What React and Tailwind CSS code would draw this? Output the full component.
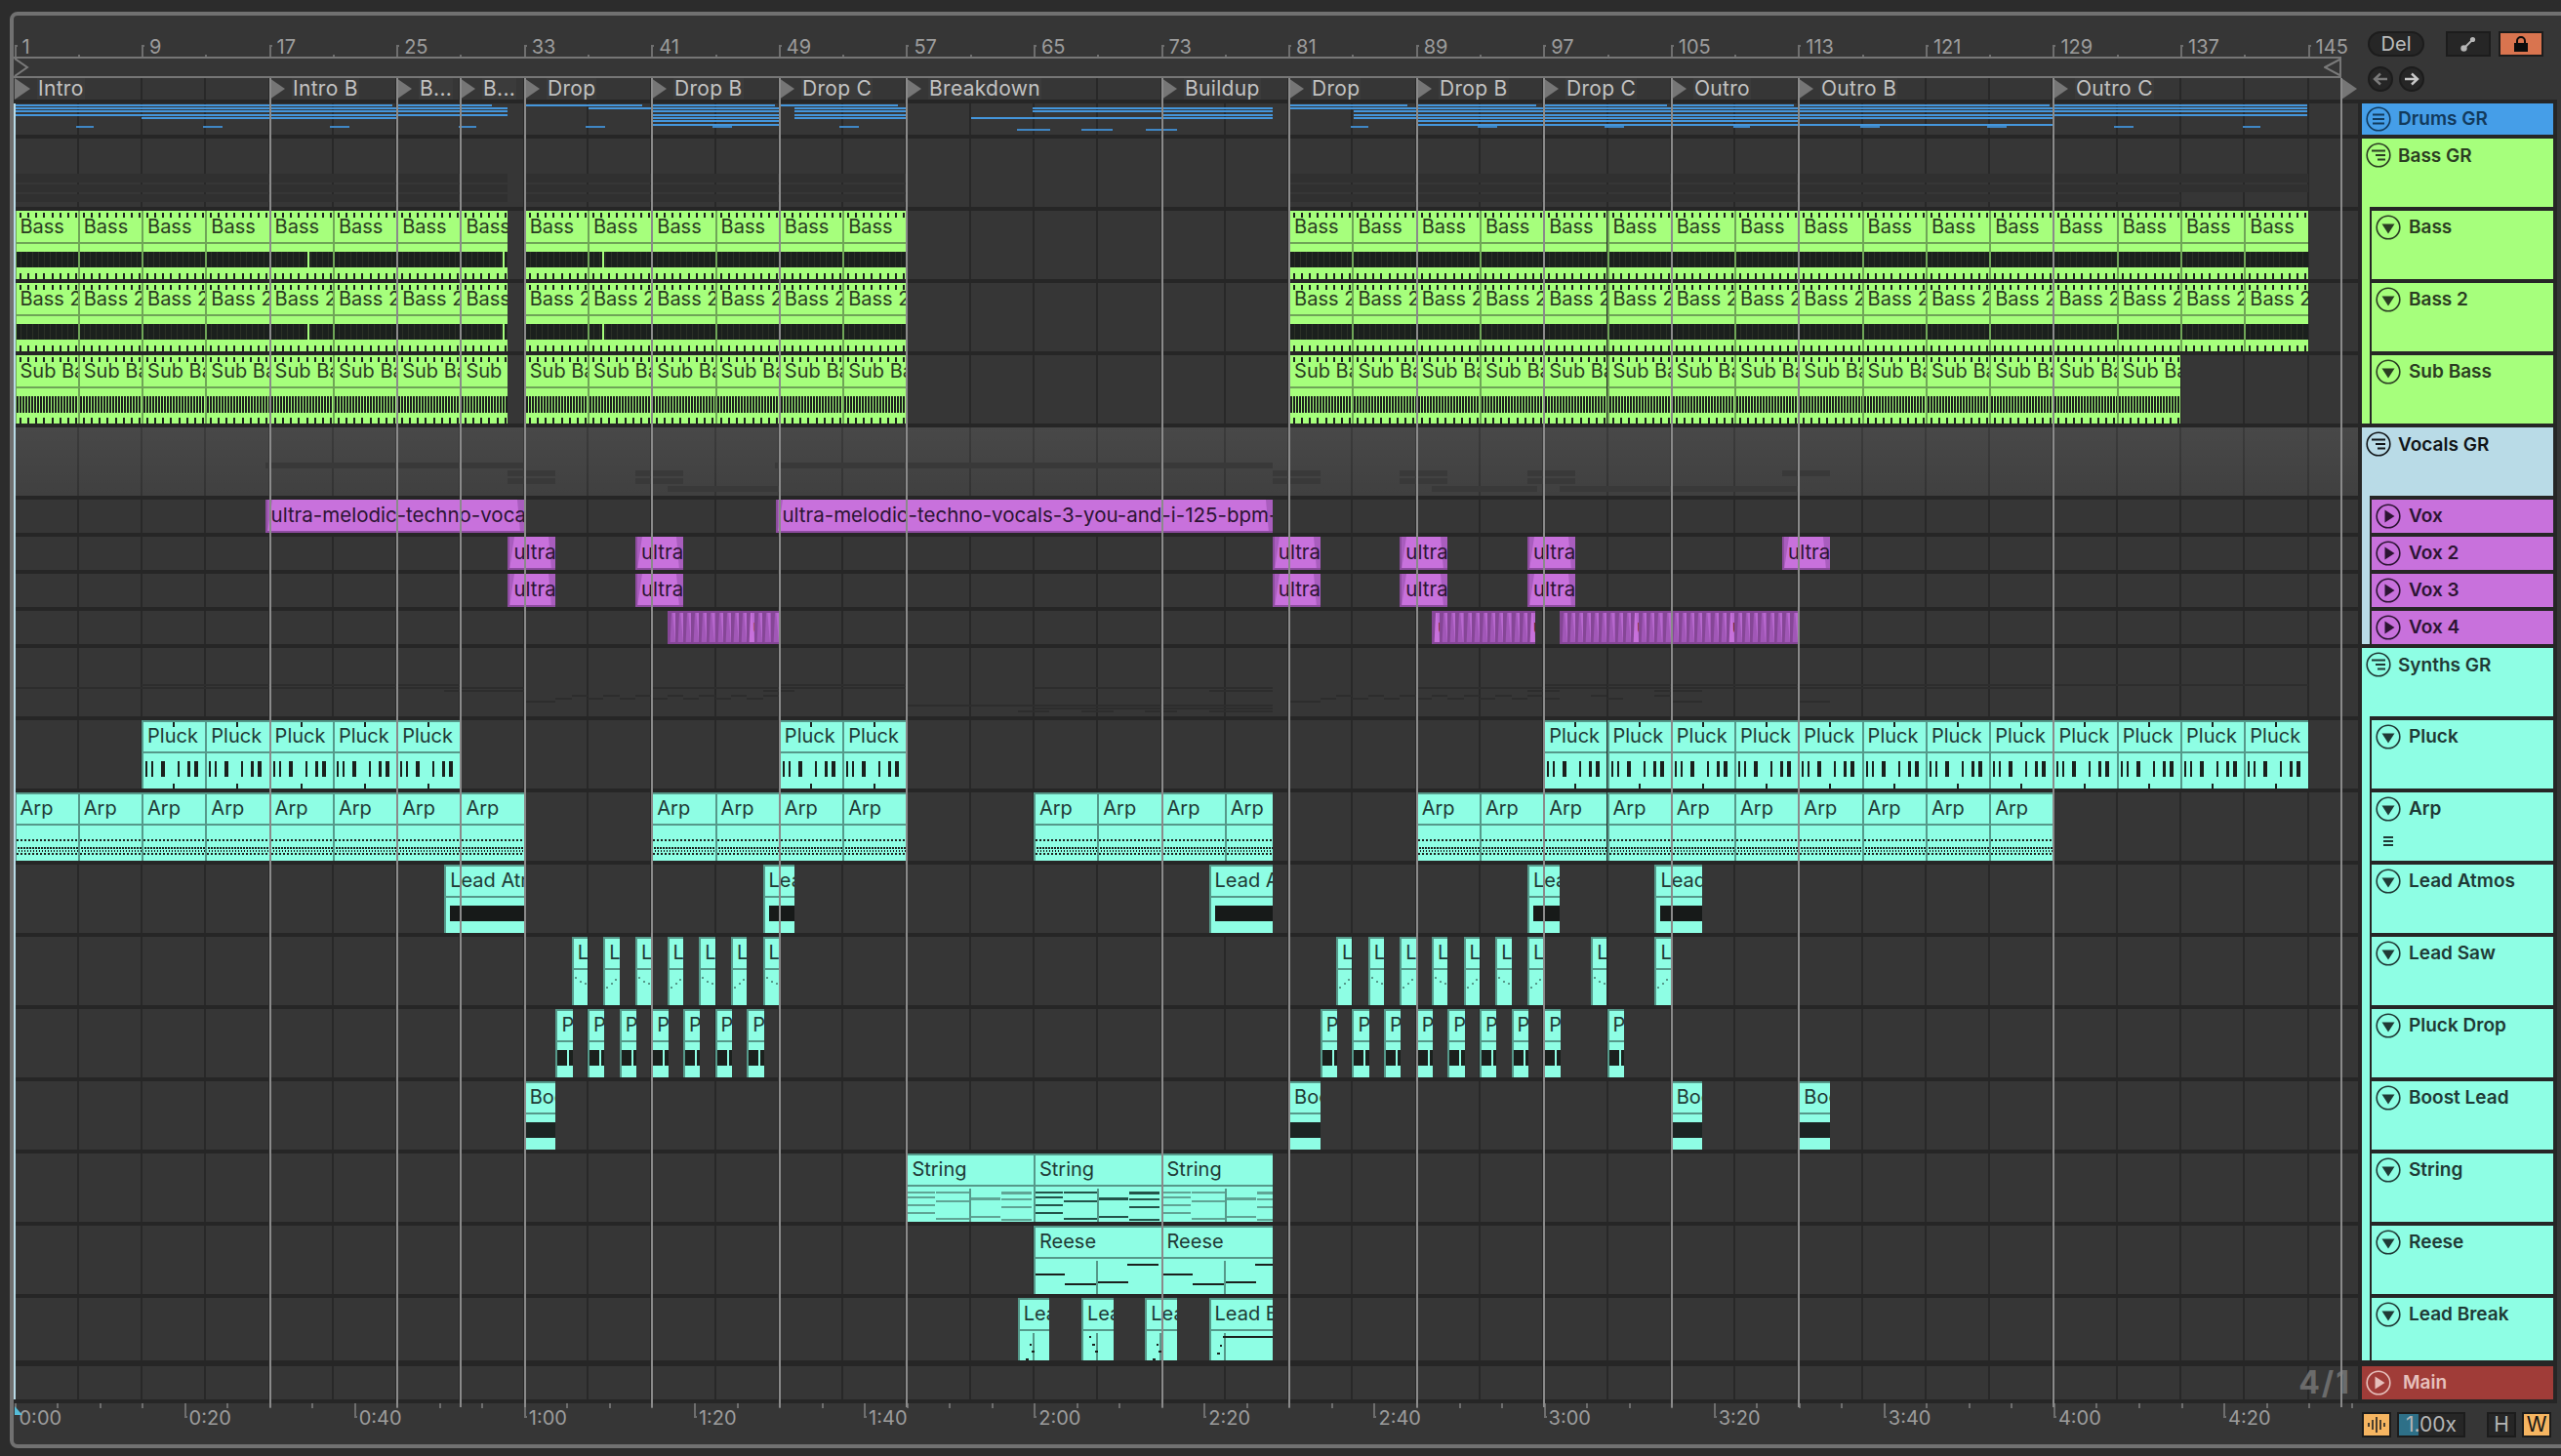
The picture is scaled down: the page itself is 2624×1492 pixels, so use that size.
import React from 'react';

const BAR = 16.32;
const X = (b) => 0.5 + (b - 1) * BAR;
const range = (a, b, s) => { const o = []; for (let i = a; i < b; i += s) o.push(i); return o; };

const T = {
  green: { bg: 'bg-[#a6ff7c]', fg: 'text-[#2b3d22]', dk: 'bg-[#6fa557]', br: 'border-[#6fa557]' },
  teal: { bg: 'bg-[#8efee4]', fg: 'text-[#1f3a36]', dk: 'bg-[#55998a]', br: 'border-[#55998a]' },
};
const NOTE = '#1b201d';

function Clip({ from, to, tone, label, top = true, left = true, children }) {
  const t = T[tone];
  return (
    <div className={`absolute top-0 h-full overflow-hidden ${t.bg} ${t.fg}`} style={{ left: X(from), width: (to - from) * BAR }}>
      <div className={`h-[34px] border-b-2 ${t.br} pl-[6px] text-[20px] leading-[33px] whitespace-nowrap`}>{label}</div>
      {children && <svg className="absolute inset-0 h-full w-full" shapeRendering="crispEdges">{children}</svg>}
      {left && <div className={`absolute left-0 top-0 h-full w-[2px] ${t.dk}`} />}
      {top && <div className={`absolute left-0 top-0 h-[2px] w-full ${t.dk}`} />}
    </div>
  );
}

const Ticks = () => (
  <g stroke={NOTE}>
    <line x1="5" x2="66" y1="4.5" y2="4.5" strokeWidth="5" strokeDasharray="2 6.16" />
    <line x1="5" x2="66" y1="67" y2="67" strokeWidth="6" strokeDasharray="2 6.16" />
  </g>
);

const GAPS = { 17: 39, 29: 44, 37: 15 };
const BassNotes = ({ bar }) => (
  <g>
    <Ticks />
    <rect x="2" y="42" width="70" height="16" fill={NOTE} />
    <line x1="0" x2="70" y1="50" y2="50" stroke="#2b3027" strokeWidth="16" strokeDasharray="1 5" />
    {GAPS[bar] && <rect x={GAPS[bar]} y="42" width="2" height="16" fill="#a6ff7c" />}
  </g>
);
const SubNotes = () => (
  <g>
    <Ticks />
    <line x1="2" x2="70" y1="50" y2="50" stroke={NOTE} strokeWidth="17" strokeDasharray="2 1" />
  </g>
);
const PluckNotes = () => (
  <g fill={NOTE}>
    <rect x="31.5" y="2" width="2" height="5" />
    <rect x="31.5" y="65" width="2" height="5" />
    {[[4, 2], [10, 2], [20, 4], [37, 2], [47, 2.5], [54, 4]].map(([x, w]) => <rect key={x} x={x} y="42" width={w} height="16" />)}
  </g>
);
const ArpNotes = () => (
  <g stroke={NOTE} strokeWidth="2">
    <line x1="2" x2="66" y1="49" y2="49" strokeDasharray="2 2" />
    <line x1="0" x2="66" y1="57" y2="57" strokeDasharray="2 1" />
    <line x1="1" x2="66" y1="59.5" y2="59.5" strokeDasharray="1 2" />
    <line x1="2" x2="66" y1="63" y2="63" strokeDasharray="2 2" />
  </g>
);
const STR = [[0, 31, [40, 45, 53, 61]], [31, 35, [40, 49, 67]], [66, 32, [46, 46.8, 65]], [98, 32, [40, 40.8, 47, 55, 68]]];
const StringNotes = ({ color }) => (
  <g stroke={color} strokeWidth="2">
    {STR.map(([x, w, ys]) => ys.map((y) => <line key={x + '-' + y} x1={x} x2={x + w - 1} y1={y} y2={y} />))}
    <line x1="65.5" x2="65.5" y1="36" y2="70" stroke="#55998a" strokeWidth="2" />
  </g>
);
const ReeseNotes = () => (
  <g stroke={NOTE} strokeWidth="2">
    {[[0, 50], [32, 60], [65, 58], [96, 40]].map(([x, y]) => <line key={x} x1={x} x2={x + 32} y1={y} y2={y} />)}
    <line x1="65" x2="65" y1="36" y2="70" stroke="#55998a" strokeWidth="2" />
  </g>
);
const Specks = ({ pts, fill = NOTE }) => (
  <g fill={fill}>{pts.map(([x, y, w = 2], i) => <rect key={i} x={x} y={y} width={w} height="2" />)}</g>
);

const Fade = ({ side }) => (
  <svg className={`absolute top-0 h-full w-[7px] ${side === 'l' ? 'left-0' : 'right-0'}`} viewBox="0 0 7 34">
    <polygon points={side === 'l' ? '0,0 7,0 2,34 0,34' : '0,0 7,0 7,34 3,34'} fill="#a95dbe" />
  </svg>
);

function VoxClip({ from, to, label }) {
  return (
    <div className="absolute top-0 h-full overflow-hidden bg-[#c871dc] pl-[6px] text-[20.5px] leading-[32px] whitespace-nowrap text-[#2c1433]" style={{ left: X(from), width: (to - from) * BAR }}>
      <Fade side="l" />
      <Fade side="r" />
      <span className="relative">{label}</span>
      <div className="absolute left-0 top-0 h-full w-[2px] bg-[#8d4c9f]" />
      <div className="absolute bottom-0 left-0 h-[2px] w-full bg-[#8d4c9f]" />
    </div>
  );
}

function VoxSlices({ from, to, marks }) {
  const n = Math.round((to - from) * 2);
  return (
    <div className="absolute top-0 flex h-full overflow-hidden" style={{ left: X(from), width: (to - from) * BAR }}>
      {range(0, n, 1).map((i) => {
        const hit = marks.includes(i);
        return (
          <div key={i} className={`relative h-full w-[8.16px] shrink-0 overflow-hidden pl-[6px] text-[20px] leading-[32px] text-[#2c1433] ${hit ? 'bg-[#c871dc]' : 'bg-[#a157b7]'}`}>
            <svg className="absolute left-0 top-0 h-full w-full" viewBox="0 0 8 34" preserveAspectRatio="none">
              <polygon points="0,0 4,0 2.5,34 0,34" fill="#854696" />
              <polygon points="5,0 8,0 8,34" fill="#b868cf" />
            </svg>
            {hit && <span className="relative">ultra</span>}
            <div className="absolute left-0 top-0 h-[2px] w-full bg-[#854696]" />
            <div className="absolute bottom-0 left-0 h-[2px] w-full bg-[#854696]" />
          </div>
        );
      })}
    </div>
  );
}

const Strip = ({ x1, x2, y, h, cls }) => (
  <div className={`absolute ${cls}`} style={{ left: x1, width: x2 - x1, top: y, height: h }} />
);

/* Drums GR overview: [lane index, x1, x2] in page pixels */
const DR_Y = [0.5, 4, 7, 10.5, 14, 17, 20.5];
const DRUMS = [
  [0, 15, 402], [0, 408, 504], [1, 15, 520], [2, 15, 520], [3, 15, 520], [4, 145, 407],
  [0, 537, 658], [1, 603, 667], [0, 667, 794], [1, 667, 798], [2, 667, 798], [3, 667, 798], [4, 667, 798], [5, 667, 798], [6, 667, 798],
  [0, 800, 920], [1, 814, 929], [2, 814, 929], [3, 814, 929], [4, 814, 929],
  [4, 995, 1304], [1, 1058, 1304], [2, 1058, 1304], [3, 1190, 1304],
  [0, 1321, 1442], [1, 1321, 2364], [2, 1387, 2364], [3, 1387, 2364], [4, 1387, 2104], [5, 1451, 1843], [6, 1451, 2104],
  [0, 1451, 1574], [0, 1583, 1708], [0, 1713, 1838], [0, 1843, 2100], [0, 2105, 2364],
];
const DASHES = [
  [24, 78, 96], [24, 208, 228], [24, 338, 358], [24, 470, 488], [24, 600, 620], [24, 730, 750], [24, 860, 880],
  [27, 1042, 1076], [27, 1108, 1140], [27, 1174, 1206],
  [24, 1384, 1402], [24, 1514, 1534], [24, 1644, 1664], [24, 1776, 1793], [24, 1906, 1926], [24, 2036, 2056], [24, 2166, 2186], [24, 2298, 2316],
];

const Lane = ({ h = 'h-[74px]', bg = '', children }) => (
  <div className={`relative border-b-4 border-[#262626] ${h} ${bg}`}>{children}</div>
);

const BASS_STARTS = [...range(1, 33, 4), ...range(33, 57, 4), ...range(81, 145, 4)];
const SUB_STARTS = [...range(1, 33, 4), ...range(33, 57, 4), ...range(81, 137, 4)];
const clipEnd = (b) => (b === 29 ? 32 : b + 4);

const VOX2 = [32, 40, 80, 88, 96, 112];
const VOX3 = [32, 40, 80, 88, 96];
const PLUCK = [...range(9, 29, 4), ...range(49, 57, 4), ...range(97, 145, 4)];
const ARP = [...range(1, 33, 4), ...range(41, 57, 4), ...range(65, 81, 4), ...range(89, 129, 4)];
const ATMOS = [[28, 33], [48, 50], [76, 80], [96, 98], [104, 107]];
const SAW = [36, 38, 40, 42, 44, 46, 48, 84, 86, 88, 90, 92, 94, 96, 100, 104];
const PDROP = [35, 37, 39, 41, 43, 45, 47, 83, 85, 87, 89, 91, 93, 95, 97, 101];
const BOOST = [33, 81, 105, 113];
const LOCS = [[1, 'Intro'], [17, 'Intro B'], [25, 'B...'], [29, 'B...'], [33, 'Drop'], [41, 'Drop B'], [49, 'Drop C'], [57, 'Breakdown'], [73, 'Buildup'], [81, 'Drop'], [89, 'Drop B'], [97, 'Drop C'], [105, 'Outro'], [113, 'Outro B'], [129, 'Outro C']];
const BARLINES = range(5, 149, 4);
const LOCLINES = [17, 25, 29, 33, 41, 49, 57, 73, 81, 89, 97, 105, 113, 129];

function Lanes() {
  return (
    <div className="relative">
      {/* bar grid */}
      {BARLINES.map((b) => <div key={b} className="absolute top-0 bottom-0 w-[2px] bg-[#282828]" style={{ left: X(b) - 1 }} />)}

      {/* locators */}
      <div className="relative h-[26px] border-b-4 border-[#262626]">
        {LOCS.map(([b, name]) => (
          <div key={b} className="absolute top-0 flex h-[22px] items-center" style={{ left: Math.round(X(b)) }}>
            <svg width="16" height="22" viewBox="0 0 16 22"><polygon points="0,0 16,11 0,22" fill="#767676" /></svg>
            <span className="ml-[7px] bg-[#3b3b3b] px-[1px] text-[21px] leading-[22px] tracking-[0.3px] whitespace-nowrap text-[#c2c2c2]">{name}</span>
          </div>
        ))}
        <svg className="absolute left-[2385px] top-0" width="16" height="22" viewBox="0 0 16 22"><polygon points="0,0 16,11 0,22" fill="#767676" /></svg>
      </div>

      {/* Drums GR */}
      <Lane h="h-[36px]">
        {DRUMS.map(([i, a, b], k) => <Strip key={k} x1={a - 14} x2={b - 14} y={DR_Y[i]} h={2} cls="bg-[#4496dc]" />)}
        {DASHES.map(([y, a, b], k) => <Strip key={k} x1={a - 14} x2={b - 14} y={y - 1} h={2} cls="bg-[#3f86c4]" />)}
      </Lane>

      {/* Bass GR */}
      <Lane>
        {[[36, 9], [47, 8], [57, 8]].map(([y, h], i) => (
          <React.Fragment key={i}>
            <Strip x1={1} x2={506} y={y} h={h} cls="bg-[#303030]" />
            <Strip x1={523} x2={914} y={y} h={h} cls="bg-[#303030]" />
            <Strip x1={1306} x2={i === 2 ? 2220 : 2351} y={y} h={h} cls="bg-[#303030]" />
          </React.Fragment>
        ))}
      </Lane>
      <Lane>{BASS_STARTS.map((b) => <Clip key={b} from={b} to={clipEnd(b)} tone="green" label="Bass" top={false}><BassNotes bar={b} /></Clip>)}</Lane>
      <Lane>{BASS_STARTS.map((b) => <Clip key={b} from={b} to={clipEnd(b)} tone="green" label="Bass 2" top={false}><BassNotes bar={b} /></Clip>)}</Lane>
      <Lane>{SUB_STARTS.map((b) => <Clip key={b} from={b} to={clipEnd(b)} tone="green" label={b === 29 ? 'Sub' : 'Sub Bass'} top={false}><SubNotes /></Clip>)}</Lane>

      {/* Vocals GR */}
      <Lane bg="bg-gradient-to-b from-white/[0.09] to-white/[0.05]">
        {[[36, 6, [[16.75, 33], [48.75, 80]]], [44, 5.5, VOX2.map((b) => [b, b + 3])], [52, 6, VOX3.map((b) => [b, b + 3])], [60, 6, [[42, 49], [90, 96.6], [98, 113]]]].map(([y, h, spans], i) =>
          spans.map(([a, b], k) => <Strip key={i + '-' + k} x1={X(a)} x2={X(b)} y={y} h={h} cls="bg-[#393939]" />)
        )}
      </Lane>
      <Lane h="h-[38px]">
        <VoxClip from={16.75} to={33} label="ultra-melodic-techno-vocals-3-you-and-i-125-bpm-" />
        <VoxClip from={48.85} to={80} label="ultra-melodic-techno-vocals-3-you-and-i-125-bpm-" />
      </Lane>
      <Lane h="h-[38px]">{VOX2.map((b) => <VoxClip key={b} from={b} to={b + 3} label="ultra" />)}</Lane>
      <Lane h="h-[38px]">{VOX3.map((b) => <VoxClip key={b} from={b} to={b + 3} label="ultra" />)}</Lane>
      <Lane h="h-[38px]">
        <VoxSlices from={42} to={49} marks={[10]} />
        <VoxSlices from={90} to={96.5} marks={[0, 12]} />
        <VoxSlices from={98} to={113} marks={[9, 21]} />
      </Lane>

      {/* Synths GR */}
      <Lane>
        {[[37, PLUCK.map((b) => [b, b + 4])], [40, ARP.map((b) => [b, b === 77 ? 80 : b + 4])], [43, ATMOS], [48, SAW.map((b) => [b, b + 1])], [51, PDROP.map((b) => [b, b + 1])], [54, BOOST.map((b) => [b, b + 2])], [58, [[57, 80]]], [61, [[65, 80]]], [64, [[64, 66], [68, 70], [72, 74], [76, 80]]]].map(([y, spans], i) =>
          spans.map(([a, b], k) => <Strip key={i + '-' + k} x1={X(a)} x2={X(b)} y={y} h={2} cls="bg-[#2d2d2d]" />)
        )}
      </Lane>
      <Lane>{PLUCK.map((b) => <Clip key={b} from={b} to={b + 4} tone="teal" label="Pluck"><PluckNotes /></Clip>)}</Lane>
      <Lane>{ARP.map((b) => <Clip key={b} from={b} to={b === 77 ? 80 : b + 4} tone="teal" label="Arp"><ArpNotes /></Clip>)}</Lane>
      <Lane>
        {ATMOS.map(([a, b]) => (
          <Clip key={a} from={a} to={b} tone="teal" label={b - a > 3 ? 'Lead Atmos' : 'Lead'}>
            <rect x="6" y="42" width="200" height="16" fill="#171a19" />
          </Clip>
        ))}
      </Lane>
      <Lane>
        {SAW.map((b, i) => (
          <Clip key={b} from={b} to={b + 1} tone="teal" label="L">
            <Specks fill="#55998a" pts={i % 2 ? [[3, 51], [8, 47], [12, 43]] : [[3, 41], [8, 45], [13, 47]]} />
          </Clip>
        ))}
      </Lane>
      <Lane>
        {PDROP.map((b) => (
          <Clip key={b} from={b} to={b + 1.06} tone="teal" label="P">
            <rect x="2" y="42" width="10" height="16" fill={NOTE} />
            <rect x="13.5" y="42" width="4" height="16" fill={NOTE} />
          </Clip>
        ))}
      </Lane>
      <Lane>
        {BOOST.map((b) => (
          <Clip key={b} from={b} to={b + 2} tone="teal" label="Boost" left={false}>
            <rect x="0" y="42" width="40" height="16" fill="#1c2523" />
          </Clip>
        ))}
      </Lane>
      <Lane>
        <Clip from={57} to={65} tone="teal" label="String"><StringNotes color="#5fa595" /></Clip>
        <Clip from={65} to={73} tone="teal" label="String"><StringNotes color="#23534a" /></Clip>
        <Clip from={73} to={80} tone="teal" label="String"><StringNotes color="#5fa595" /></Clip>
      </Lane>
      <Lane>
        <Clip from={65} to={73} tone="teal" label="Reese"><ReeseNotes /></Clip>
        <Clip from={73} to={80} tone="teal" label="Reese"><ReeseNotes /></Clip>
      </Lane>
      <Lane h="h-[70px] border-b-[6px]">
        {[[64, 66], [68, 70], [72, 74], [76, 80]].map(([a, b], i) => (
          <Clip key={a} from={a} to={b} tone="teal" label="Lead Break">
            <line x1="16" x2="16" y1="36" y2="64" stroke="#55998a" strokeWidth="2" />
            <Specks pts={i === 3 ? [[14, 39, 52], [11, 48], [8, 56, 3]] : i === 1 ? [[8, 39], [11, 47, 3], [14, 54, 3]] : [[12, 47], [14, 54, 3], [8, 62, 3]]} />
          </Clip>
        ))}
      </Lane>
      {/* Main */}
      <Lane h="h-[38px]">
        <span className="absolute right-[7px] top-0 text-[32px] leading-[34px] font-bold tracking-[2px] text-[#6b6b6b]">4/1</span>
      </Lane>

      {/* playhead line and locator lines, over everything */}
      <div className="absolute left-0 top-[26px] bottom-[4px] w-[2px] bg-[#b9dbe7]" />
      {LOCLINES.map((b) => <div key={b} className="absolute top-0 bottom-[-4px] z-10 w-[2px] bg-[#8a8a8a]" style={{ left: Math.round(X(b)) }} />)}
      <div className="absolute left-[2384px] top-0 bottom-[-4px] z-10 w-[2px] bg-[#8a8a8a]" />
    </div>
  );
}

function TopRuler() {
  return (
    <div>
      <div className="relative h-[44px] w-[2385px] border-b-2 border-[#767676]">
        {range(1, 146, 8).map((b) => (
          <React.Fragment key={b}>
            <div className="absolute bottom-0 h-[12px] w-[3px] border-l-2 border-t-2 border-[#6e6e6e]" style={{ left: X(b) }} />
            <span className="absolute top-[20px] text-[20px] leading-[24px] text-[#9c9c9c]" style={{ left: X(b) + 8 }}>{b}</span>
          </React.Fragment>
        ))}
        {range(5, 146, 8).map((b) => <div key={b} className="absolute bottom-0 h-[2px] w-[2px] bg-[#6e6e6e]" style={{ left: X(b) }} />)}
      </div>
      <div className="relative h-[20px] w-[2385px] border-b-2 border-[#767676]">
        <svg className="absolute left-0 top-0" width="16" height="18" viewBox="0 0 16 18"><polyline points="1,0 14,9 1,18" fill="none" stroke="#7a7a7a" strokeWidth="2" /></svg>
        <svg className="absolute right-0 top-0" width="18" height="18" viewBox="0 0 18 18"><polygon points="1,9 18,0 18,18" fill="none" stroke="#7a7a7a" strokeWidth="2" /></svg>
        <div className="absolute right-0 top-0 h-full w-[2px] bg-[#767676]" />
      </div>
    </div>
  );
}

function BottomRuler() {
  return (
    <div className="relative h-[42px]">
      {range(0, 56, 1).map((i) => <div key={i} className="absolute top-0 h-[5px] w-[2px] bg-[#6e6e6e]" style={{ left: 0.5 + i * 43.53 }} />)}
      {['0:00', '0:20', '0:40', '1:00', '1:20', '1:40', '2:00', '2:20', '2:40', '3:00', '3:20', '3:40', '4:00', '4:20'].map((t, i) => (
        <React.Fragment key={t}>
          {i > 0 && <div className="absolute top-0 h-[15px] w-[3px] border-b-2 border-l-2 border-[#6e6e6e]" style={{ left: 0.5 + i * 174.12 }} />}
          <span className="absolute top-[3px] text-[20px] leading-[24px] text-[#9c9c9c]" style={{ left: 5.5 + i * 174.12 }}>{t}</span>
        </React.Fragment>
      ))}
      <svg className="absolute left-0 top-[3px]" width="9" height="9" viewBox="0 0 9 9"><polygon points="1,0 9,9 1,9" fill="#55bcd8" /></svg>
    </div>
  );
}

function Badge({ kind, color = 'currentColor' }) {
  return (
    <svg width="26" height="26" viewBox="0 0 26 26" className="shrink-0" fill="none" stroke={color} strokeWidth="1.6">
      <circle cx="13" cy="13" r="11.8" />
      {kind === 'down' && <polygon points="6.5,9.5 19.5,9.5 13,19.5" fill={color} stroke="none" />}
      {kind === 'play' && <polygon points="9.5,6.5 19.5,13 9.5,19.5" fill={color} stroke="none" />}
      {kind === 'even' && <path d="M7 8.5H19M7 13H19M7 17.5H19" strokeWidth="2" />}
      {kind === 'step' && <path d="M6 8.5H20M10 13H20M12 17.5H20" strokeWidth="2" />}
    </svg>
  );
}

function Cell({ name, kind, h = 'h-[70px]', bg, fg, extra }) {
  return (
    <div className={`flex items-start gap-[8px] pl-[4px] pt-[4px] ${h} ${bg} ${fg}`}>
      <div className="flex w-[26px] shrink-0 flex-col items-center gap-[15px]">
        <Badge kind={kind} />
        {extra}
      </div>
      <span className="text-[19px] font-semibold leading-[26px] whitespace-nowrap">{name}</span>
    </div>
  );
}

function Group({ name, bg, fg, kids }) {
  return (
    <div className={`${bg}`}>
      <div className={`flex h-[70px] items-start gap-[7px] pl-[4px] pt-[4px] ${fg}`}>
        <Badge kind="step" />
        <span className="text-[19px] font-semibold leading-[27px] whitespace-nowrap">{name}</span>
      </div>
      {kids.map((k) => (
        <div key={k.name} className="ml-[8px] bg-[#262626] pl-[2px] pt-[4px]">
          <Cell {...k} />
        </div>
      ))}
    </div>
  );
}

const Btn = ({ cls, children }) => (
  <div className={`flex h-[26px] items-center justify-center border-2 border-[#1c1c1c] ${cls}`}>{children}</div>
);

function Side() {
  const green = { bg: 'bg-[#a6ff7c]', fg: 'text-[#2b3d22]', kind: 'down' };
  const vox = { bg: 'bg-[#c871dc]', fg: 'text-[#2c1433]', kind: 'play', h: 'h-[34px]' };
  const teal = { bg: 'bg-[#8efee4]', fg: 'text-[#1f3a36]', kind: 'down' };
  return (
    <div className="w-[204px] shrink-0">
      {/* top buttons */}
      <div className="h-[90px] border-b-4 border-[#262626] pl-[10px] pt-[16px]">
        <div className="flex items-start">
          <div className="flex h-[26px] w-[58px] items-center justify-center rounded-full border-2 border-[#1c1c1c] bg-[#262626] text-[20px] text-[#bdbdbd]">Del</div>
          <Btn cls="ml-[22px] w-[46px] bg-[#262626]">
            <svg width="16" height="16" viewBox="0 0 16 16"><line x1="3.5" y1="12.5" x2="12.5" y2="3.5" stroke="#b5b5b5" strokeWidth="2" /><circle cx="3.5" cy="12.5" r="3.2" fill="#b5b5b5" /><circle cx="12.5" cy="3.5" r="2.6" fill="#b5b5b5" /></svg>
          </Btn>
          <Btn cls="ml-[8px] w-[46px] bg-[#d9744f]">
            <svg width="16" height="16" viewBox="0 0 16 16"><rect x="1" y="7" width="14" height="9" fill="#0c0c0c" /><path d="M4 8V5a4 4 0 0 1 8 0v3" fill="none" stroke="#0c0c0c" strokeWidth="2" /></svg>
          </Btn>
        </div>
        <div className="mt-[10px] flex gap-[6px]">
          {[false, true].map((r) => (
            <div key={String(r)} className="flex h-[26px] w-[26px] items-center justify-center rounded-full border-2 border-[#1c1c1c] bg-[#262626]">
              <svg width="16" height="14" viewBox="0 0 16 14" className={r ? '' : 'rotate-180'}>
                <path d="M1 7H13M8 1.5L14 7L8 12.5" fill="none" stroke={r ? '#c8c8c8' : '#7a7a7a'} strokeWidth="2.4" />
              </svg>
            </div>
          ))}
        </div>
      </div>

      {/* track headers */}
      <div className="flex flex-col gap-[4px] bg-[#262626] px-[4px] pb-[4px]">
        <div className="flex h-[32px] items-center gap-[7px] bg-[#459ee8] pl-[4px] text-[#123a5c]">
          <Badge kind="even" />
          <span className="text-[19px] font-semibold">Drums GR</span>
        </div>
        <Group name="Bass GR" bg="bg-[#a6ff7c]" fg="text-[#2b3d22]" kids={[{ name: 'Bass', ...green }, { name: 'Bass 2', ...green }, { name: 'Sub Bass', ...green }]} />
        <Group name="Vocals GR" bg="bg-[#b9dbe7]" fg="text-[#111518]" kids={[{ name: 'Vox', ...vox }, { name: 'Vox 2', ...vox }, { name: 'Vox 3', ...vox }, { name: 'Vox 4', ...vox }]} />
        <Group name="Synths GR" bg="bg-[#8efee4]" fg="text-[#1f3a36]" kids={[
          { name: 'Pluck', ...teal },
          { name: 'Arp', ...teal, extra: <div className="flex w-[10px] flex-col gap-[2px]"><i className="h-[2px] bg-[#1f3a36]" /><i className="h-[2px] bg-[#1f3a36]" /><i className="h-[2px] bg-[#1f3a36]" /></div> },
          { name: 'Lead Atmos', ...teal },
          { name: 'Lead Saw', ...teal },
          { name: 'Pluck Drop', ...teal },
          { name: 'Boost Lead', ...teal },
          { name: 'String', ...teal },
          { name: 'Reese', ...teal },
          { name: 'Lead Break', ...teal, h: 'h-[64px]' },
        ]} />
        <div className="mt-[2px] flex h-[34px] items-center gap-[12px] bg-[#a03c38] pl-[4px] text-[#e6c0bc]">
          <Badge kind="play" />
          <span className="text-[19px] font-semibold">Main</span>
        </div>
      </div>

      {/* bottom controls */}
      <div className="flex h-[42px] items-start pl-[4px] pt-[9px]">
        <Btn cls="w-[30px] bg-[#f6b561]">
          <svg width="20" height="18" viewBox="0 0 20 18" stroke="#222" strokeWidth="1.6"><path d="M2 7V11M6 4V14M10 1V17M14 4V14M18 7V11" /></svg>
        </Btn>
        <div className="relative ml-[6px] flex h-[26px] w-[70px] items-center justify-center overflow-hidden border-2 border-[#1c1c1c] bg-[#262626] text-[21px] text-[#b5b5b5]">
          <div className="absolute left-0 top-0 h-full w-[20px] bg-[#2e7088]" />
          <span className="relative">1.00x</span>
        </div>
        <Btn cls="ml-[22px] w-[30px] bg-[#262626] text-[21px] text-[#b5b5b5]">H</Btn>
        <Btn cls="ml-[6px] w-[30px] bg-[#f6b561] text-[21px] text-[#141414]">W</Btn>
      </div>
    </div>
  );
}

export default function App() {
  return (
    <div className="h-[1492px] w-[2624px] overflow-hidden bg-[#2c2c2c] pl-[10px] pt-[12px] font-['Inter','Liberation_Sans',sans-serif]">
      <div className="flex h-[1472px] w-[2640px] overflow-hidden rounded-lg border-4 border-[#717171] bg-[#363636]">
        <div className="w-[2402px] shrink-0">
          <TopRuler />
          <Lanes />
          <BottomRuler />
        </div>
        <Side />
      </div>
    </div>
  );
}
